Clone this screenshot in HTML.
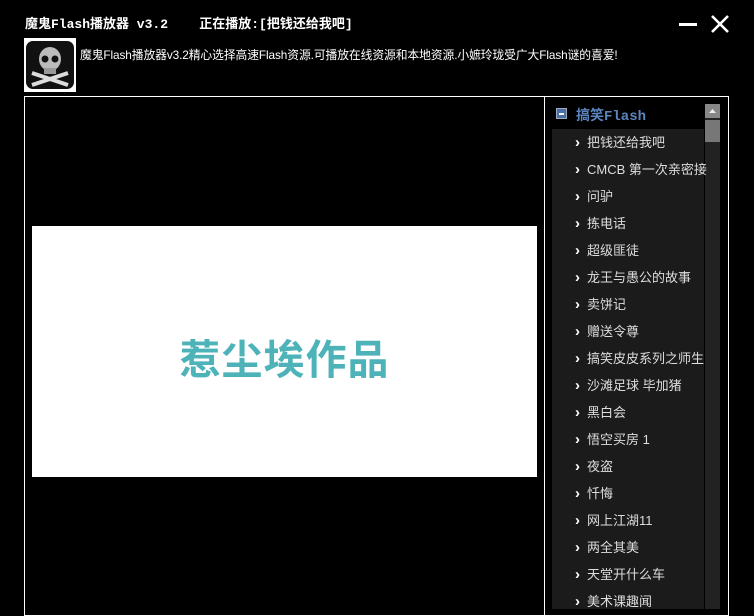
<!DOCTYPE html>
<html><head><meta charset="utf-8"><style>
*{margin:0;padding:0;box-sizing:border-box}
body{width:754px;height:607px;background:#000;overflow:hidden;position:relative;font-family:"Liberation Sans","Noto Sans CJK SC","WenQuanYi Zen Hei",sans-serif;color:#fff}
.a{position:absolute}
.title{left:25px;top:13px;font-size:13px;font-weight:bold;font-family:"Liberation Mono","Noto Sans CJK SC",monospace;white-space:pre}
.desc{left:80px;top:46px;font-size:11.8px;white-space:nowrap;letter-spacing:-0.1px}
.item{position:absolute;left:575px;font-size:13px;color:#ddd;white-space:nowrap}
.item b{display:inline-block;width:12px;color:#fff;font-size:15px;line-height:13px;font-weight:900}
</style></head><body>
<div class="a title">魔鬼Flash播放器 v3.2    正在播放:[把钱还给我吧]</div>
<div class="a" style="left:679px;top:23px;width:18px;height:3px;background:#fff"></div>
<svg class="a" style="left:709px;top:13px" width="22" height="22"><path d="M3 3L19 19M19 3L3 19" stroke="#fff" stroke-width="2.6"/></svg>
<div class="a" style="left:24px;top:38px;width:52px;height:54px;background:#fff"></div>
<div class="a" style="left:26px;top:41px;width:48px;height:48px;background:#111;border-radius:7px"></div>
<svg class="a" style="left:26px;top:41px" width="48" height="48">
<ellipse cx="24" cy="18" rx="11" ry="12" fill="#bbb"/><circle cx="19" cy="18" r="3.5" fill="#111"/><circle cx="29" cy="18" r="3.5" fill="#111"/>
<path d="M6 32L42 44M42 32L6 44" stroke="#ddd" stroke-width="4"/><rect x="18" y="27" width="12" height="6" fill="#999"/></svg>
<div class="a desc">魔鬼Flash播放器v3.2精心选择高速Flash资源.可播放在线资源和本地资源.小嫬玲珑受广大Flash谜的喜爱!</div>
<div class="a" style="left:24px;top:96px;width:705px;height:520px;border:1px solid #fff"></div>
<div class="a" style="left:544px;top:96px;width:1px;height:520px;background:#fff"></div>
<div class="a" style="left:32px;top:226px;width:505px;height:251px;background:#fff"></div>
<div class="a" style="left:32px;top:326px;width:505px;text-align:center;font-size:41px;font-weight:bold;color:#4db3b9;letter-spacing:1px">惹尘埃作品</div>
<div class="a" style="left:552px;top:129px;width:152px;height:480px;background:#1b1b1b"></div>
<div class="a" style="left:705px;top:104px;width:15px;height:505px;background:#222"></div>
<div class="a" style="left:705px;top:104px;width:15px;height:14px;background:#888"></div>
<svg class="a" style="left:708px;top:107px" width="9" height="8"><path d="M1 6L4.5 2L8 6Z" fill="#eee"/></svg>
<div class="a" style="left:705px;top:120px;width:15px;height:22px;background:#777"></div>
<div class="a" style="left:556px;top:108px;width:11px;height:11px;background:#4a6fa8;border:1px solid #9ab"></div>
<div class="a" style="left:559px;top:113px;width:5px;height:2px;background:#fff"></div>
<div class="a" style="left:576px;top:105px;font-size:14px;font-weight:bold;color:#5c85c0;font-family:'Liberation Mono','Noto Sans CJK SC',monospace">搞笑Flash</div>
<div class="item" style="top:132px"><b>›</b>把钱还给我吧</div>
<div class="item" style="top:159px"><b>›</b>CMCB 第一次亲密接</div>
<div class="item" style="top:186px"><b>›</b>问驴</div>
<div class="item" style="top:213px"><b>›</b>拣电话</div>
<div class="item" style="top:240px"><b>›</b>超级匪徒</div>
<div class="item" style="top:267px"><b>›</b>龙王与愚公的故事</div>
<div class="item" style="top:294px"><b>›</b>卖饼记</div>
<div class="item" style="top:321px"><b>›</b>赠送令尊</div>
<div class="item" style="top:348px"><b>›</b>搞笑皮皮系列之师生</div>
<div class="item" style="top:375px"><b>›</b>沙滩足球 毕加猪</div>
<div class="item" style="top:402px"><b>›</b>黑白会</div>
<div class="item" style="top:429px"><b>›</b>悟空买房 1</div>
<div class="item" style="top:456px"><b>›</b>夜盗</div>
<div class="item" style="top:483px"><b>›</b>忏悔</div>
<div class="item" style="top:510px"><b>›</b>网上江湖11</div>
<div class="item" style="top:537px"><b>›</b>两全其美</div>
<div class="item" style="top:564px"><b>›</b>天堂开什么车</div>
<div class="item" style="top:591px"><b>›</b>美术课趣闻</div>
</body></html>
